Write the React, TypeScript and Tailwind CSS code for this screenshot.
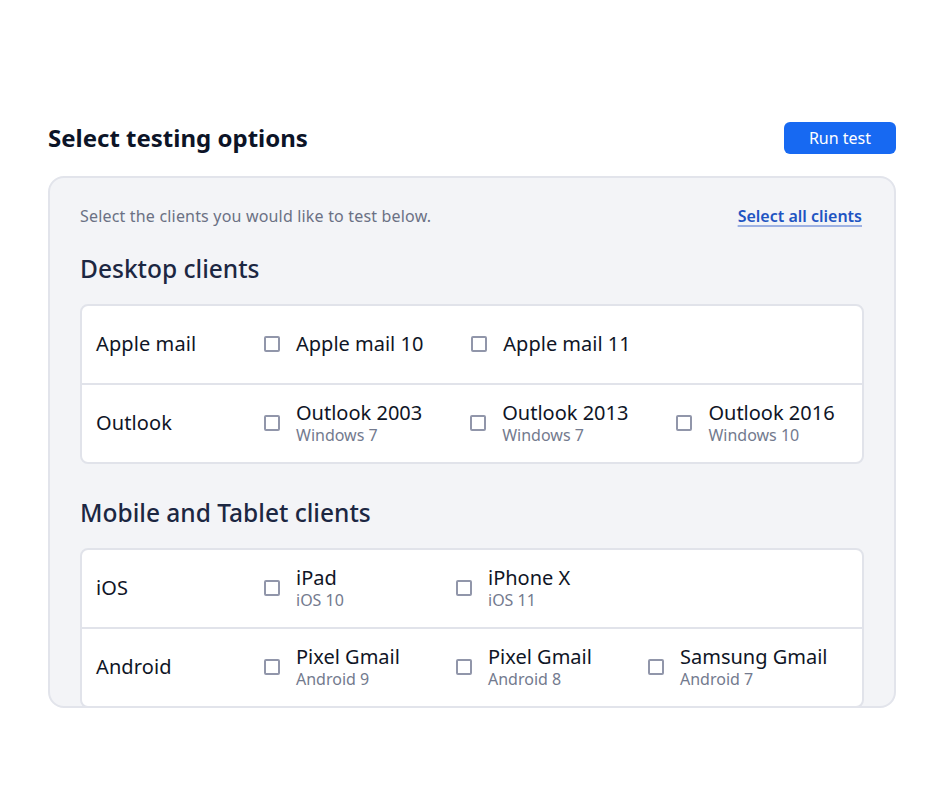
import React from "react";

type Opt = { name: string; sub?: string };
type Row = { label: string; options: Opt[] };

const desktop: Row[] = [
  { label: "Apple mail", options: [{ name: "Apple mail 10" }, { name: "Apple mail 11" }] },
  {
    label: "Outlook",
    options: [
      { name: "Outlook 2003", sub: "Windows 7" },
      { name: "Outlook 2013", sub: "Windows 7" },
      { name: "Outlook 2016", sub: "Windows 10" },
    ],
  },
];

const mobile: Row[] = [
  {
    label: "iOS",
    options: [
      { name: "iPad", sub: "iOS 10" },
      { name: "iPhone X", sub: "iOS 11" },
    ],
  },
  {
    label: "Android",
    options: [
      { name: "Pixel Gmail", sub: "Android 9" },
      { name: "Pixel Gmail", sub: "Android 8" },
      { name: "Samsung Gmail", sub: "Android 7" },
    ],
  },
];

function Option({ o }: { o: Opt }) {
  return (
    <label className="flex items-center gap-4 min-w-[144px]">
      <span className="w-4 h-4 shrink-0 rounded-[2px] border-2 border-[#9196aa] bg-white" />
      <span className="flex flex-col">
        <span className="text-[20px] leading-[24px] text-[#0f1526]">{o.name}</span>
        {o.sub && <span className="text-[16px] leading-[20px] text-[#737a8e]">{o.sub}</span>}
      </span>
    </label>
  );
}

function Card({ rows }: { rows: Row[] }) {
  return (
    <div className="rounded-[8px] border-2 border-[#e1e3ea] bg-white overflow-hidden">
      {rows.map((r, i) => (
        <div
          key={r.label}
          className={
            "flex items-center pl-[14px] pb-[2px] " +
            (i > 0 ? "h-[79px] border-t-2 border-[#e1e3ea]" : "h-[77px]")
          }
        >
          <div className="w-[168px] shrink-0 text-[20px] leading-[24px] text-[#0f1526] tracking-[0.1px]">
            {r.label}
          </div>
          <div className="flex items-center gap-12">
            {r.options.map((o, j) => (
              <Option key={j} o={o} />
            ))}
          </div>
        </div>
      ))}
    </div>
  );
}

export default function App() {
  return (
    <div
      className="w-[944px] h-[800px] bg-white px-12 pt-[122px]"
      style={{ fontFamily: '"Noto Sans", "Open Sans", sans-serif' }}
    >
      <div className="flex items-center justify-between h-8">
        <h1 className="text-[24px] leading-8 font-bold text-[#0c1427]">Select testing options</h1>
        <button className="w-[112px] h-8 rounded-[6px] bg-[#1769f2] text-white text-[16px] leading-none">
          Run test
        </button>
      </div>

      <div className="mt-[22px] h-[532px] rounded-[16px] border-2 border-[#e2e4eb] bg-[#f3f4f7] px-[30px] pt-[26px] overflow-hidden">
        <div className="flex items-center justify-between h-6">
          <p className="text-[16px] leading-6 text-[#6b7184] tracking-[0.18px]">
            Select the clients you would like to test below.
          </p>
          <a
            href="#"
            className="text-[16px] leading-6 font-semibold text-[#1f54c2] underline decoration-[#9db1e3] decoration-2 underline-offset-[3px] mr-[2px]"
          >
            Select all clients
          </a>
        </div>

        <h2 className="mt-[25px] text-[24.5px] leading-8 font-medium text-[#1c2742]">Desktop clients</h2>
        <div className="mt-[19px]">
          <Card rows={desktop} />
        </div>

        <h2 className="mt-[33px] text-[24.5px] leading-8 font-medium text-[#1c2742]">
          Mobile and Tablet clients
        </h2>
        <div className="mt-[19px]">
          <Card rows={mobile} />
        </div>
      </div>
    </div>
  );
}
